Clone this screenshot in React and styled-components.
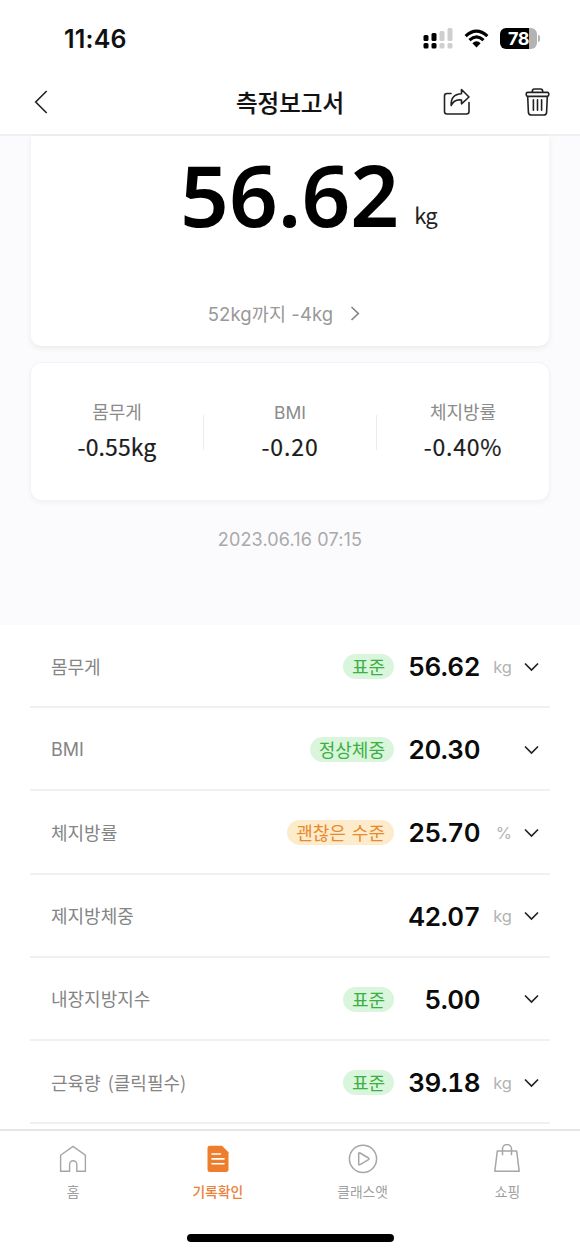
import styled, { createGlobalStyle } from "styled-components";

const GlobalStyle = createGlobalStyle`
*{
  box-sizing:border-box;
}
body{
  margin:0;
  background:#fff;
  font-family:Inter, "Noto Sans CJK KR", sans-serif;
}
`;

const Screen = styled.div`
display:flex;
flex-direction:column;
width:580px;
height:1254px;
overflow:hidden;
background:#fff;
`;

const StatusBar = styled.div`
display:flex;
justify-content:space-between;
align-items:center;
height:70px;
flex:none;
padding:7px 39px 0 64px;
`;

const Clock = styled.div`
font-size:25px;
line-height:30px;
font-weight:600;
letter-spacing:0.2px;
color:#111;
`;

const StatusIcons = styled.div`
display:flex;
align-items:center;
gap:11px;
`;

const Battery = styled.div`
position:relative;
display:flex;
justify-content:center;
align-items:center;
width:37px;
height:21px;
margin-right:4px;
border-radius:6px;
background:linear-gradient(to right, #000 29px, #b3b3b3 29px);
color:#fff;
font-size:18px;
font-weight:700;
letter-spacing:-0.5px;
&::after{
  content:"";
  position:absolute;
  left:38px;
  top:7px;
  width:2px;
  height:7px;
  border-radius:0 2px 2px 0;
  background:#b3b3b3;
}
`;

const Header = styled.div`
display:grid;
grid-template-columns:1fr auto 1fr;
align-items:center;
height:66px;
flex:none;
padding:0 30px 1px 34px;
border-bottom:2px solid #f0f0f1;
`;

const Title = styled.div`
padding-right:4px;
font-family:"Noto Sans CJK KR", sans-serif;
font-size:23.5px;
line-height:34px;
font-weight:500;
-webkit-text-stroke:0.2px #111;
color:#111;
`;

const Actions = styled.div`
display:flex;
justify-content:flex-end;
align-items:center;
gap:54px;
`;

const Summary = styled.div`
display:flex;
flex-direction:column;
align-items:center;
height:489px;
flex:none;
background:#fbfbfe;
`;

const WeightCard = styled.div`
display:flex;
flex-direction:column;
align-items:center;
width:518px;
height:210px;
padding-top:13px;
border-radius:0 0 10px 10px;
background:#fff;
box-shadow:0 2px 6px rgba(0,0,0,0.07);
`;

const Weight = styled.div`
display:flex;
align-items:baseline;
height:90px;
padding-left:37px;
line-height:90px;
font-family:"Noto Sans", sans-serif;
font-size:85.5px;
font-weight:600;
color:#000;
`;

const WeightUnit = styled.span`
position:relative;
top:-3px;
margin-left:15px;
font-family:"Noto Sans CJK KR", sans-serif;
font-size:22px;
font-weight:400;
line-height:30px;
letter-spacing:-0.8px;
color:#222;
`;

const Goal = styled.div`
display:flex;
align-items:center;
gap:17px;
margin-top:60px;
padding-right:12px;
height:28px;
font-size:18.5px;
letter-spacing:0.1px;
color:#999;
`;

const ChangeCard = styled.div`
display:flex;
align-items:flex-start;
width:520px;
height:139px;
margin-top:16px;
padding-top:36px;
border:1px solid #f3f3f4;
border-radius:12px;
background:#fff;
box-shadow:0 2px 5px rgba(0,0,0,0.04);
`;

const Change = styled.div`
display:flex;
flex-direction:column;
align-items:center;
flex:1;
`;

const ChangeName = styled.div`
height:26px;
line-height:${(props) => (props.$latin ? 27 : 25)}px;
font-family:${(props) => (props.$latin ? "Inter" : '"Noto Sans CJK KR"')}, sans-serif;
font-size:${(props) => (props.$latin ? "17.5px" : "18px")};
color:#8b8b8b;
`;

const ChangeValue = styled.div`
height:32px;
margin-top:5px;
line-height:32px;
font-family:"Noto Sans CJK KR", sans-serif;
font-size:23px;
letter-spacing:${(props) => props.$spacing}px;
-webkit-text-stroke:0.2px #1c1c1c;
color:#1c1c1c;
`;

const Divider = styled.div`
width:1px;
height:35px;
margin-top:16px;
background:#ececec;
`;

const Measured = styled.div`
margin-top:27px;
line-height:24px;
font-size:18px;
letter-spacing:0.15px;
color:#a9a9a9;
`;

const List = styled.div`
flex:1;
min-height:0;
overflow:hidden;
padding:0 30px;
`;

const Row = styled.div`
display:flex;
align-items:center;
height:83.2px;
padding:2px 11px 0 21px;
border-bottom:2px solid #f0f0f1;
`;

const RowName = styled.div`
flex:1;
padding-bottom:${(props) => (props.$latin ? 0 : 2)}px;
font-family:${(props) => (props.$latin ? "Inter" : '"Noto Sans CJK KR"')}, sans-serif;
font-size:18px;
line-height:26px;
word-spacing:3px;
color:#858585;
`;

const Badge = styled.div`
height:25px;
line-height:24px;
padding:0 9px;
border-radius:13px;
font-family:"Noto Sans CJK KR", sans-serif;
font-size:18px;
word-spacing:2px;
color:${(props) => (props.$warn ? "#e8892f" : "#3cb043")};
background:${(props) => (props.$warn ? "#fdeccb" : "#d9f6dd")};
`;

const RowValue = styled.div`
width:86px;
text-align:right;
font-size:26px;
font-weight:600;
font-variant-numeric:tabular-nums;
letter-spacing:-0.5px;
color:#0b0b0b;
`;

const RowUnit = styled.div`
width:32px;
margin-right:12px;
text-align:right;
font-size:16.5px;
color:#b3b3b3;
`;

const TabBar = styled.div`
display:flex;
height:125px;
flex:none;
flex-direction:column;
justify-content:space-between;
align-items:center;
padding-bottom:12px;
border-top:2px solid #e6e6e7;
background:#fff;
`;

const Tabs = styled.div`
display:flex;
width:580px;
padding-left:0.6px;
`;

const Tab = styled.div`
display:flex;
flex-direction:column;
align-items:center;
width:144.8px;
padding-top:13px;
font-family:"Noto Sans CJK KR", sans-serif;
font-size:13.8px;
line-height:20px;
gap:7px;
font-weight:${(props) => (props.$active ? 500 : 400)};
color:${(props) => (props.$active ? "#ec8038" : "#a0a0a0")};
`;

const HomeIndicator = styled.div`
width:207px;
height:8px;
border-radius:4px;
background:#000;
`;

const SignalIcon = () => (
  <svg width="30" height="21" viewBox="0 0 30 21">
    <g fill="#000">
      <rect x="0.5" y="7" width="5" height="6" rx="1.5" />
      <rect x="0.5" y="15" width="5" height="5.5" rx="1.5" />
      <rect x="8.5" y="5" width="5" height="8" rx="1.5" />
      <rect x="8.5" y="15" width="5" height="5.5" rx="1.5" />
    </g>
    <g fill="#cfcfcf">
      <rect x="16.5" y="3" width="5" height="10" rx="1.5" />
      <rect x="16.5" y="15" width="5" height="5.5" rx="1.5" />
      <rect x="24.5" y="0" width="5" height="13" rx="1.5" />
      <rect x="24.5" y="15" width="5" height="5.5" rx="1.5" />
    </g>
  </svg>
);

const WifiIcon = () => (
  <svg width="25" height="19" viewBox="0 0 26 19" fill="none" stroke="#000" strokeWidth="3.3">
    <path d="M1.7 7Q13-3.4 24.3 7" />
    <path d="M5.7 11.2Q13 4.5 20.3 11.2" />
    <path d="M8.7 14.4Q13 10.4 17.3 14.4L13 18.8Z" fill="#000" stroke="none" />
  </svg>
);

const BackIcon = () => (
  <svg width="14" height="24" viewBox="0 0 14 24" fill="none" stroke="#222" strokeWidth="1.6">
    <path d="M12.7 1L1.7 12L12.7 23" />
  </svg>
);

const ShareIcon = () => (
  <svg width="28" height="28" viewBox="0 0 28 28" fill="none" stroke="#222" strokeWidth="1.6" strokeLinejoin="round" strokeLinecap="round">
    <path d="M8 5.5H4Q1.5 5.5 1.5 8V23.5Q1.5 26 4 26H23.5Q26 26 26 23.5V14.5" />
    <path d="M18.5 1.5L26 9L18.5 15.8V12Q11 11 8.2 17.5Q7.5 6.5 18.5 5.8Z" />
  </svg>
);

const TrashIcon = () => (
  <svg width="25" height="29" viewBox="0 0 25 29" fill="none" stroke="#222" strokeWidth="1.6" strokeLinejoin="round" strokeLinecap="round">
    <path d="M7.3 5.3V4.3Q7.3 2 9.5 2H15.5Q17.7 2 17.7 4.3V5.3" />
    <rect x="1.2" y="5.4" width="22.6" height="4" rx="1.6" />
    <path d="M2.7 9.6L3.4 25.3Q3.7 28 6.3 28H18.7Q21.3 28 21.6 25.3L22.3 9.6" />
    <path d="M8.4 12.7V23.2M12.5 12.7V23.2M16.6 12.7V23.2" />
  </svg>
);

const GoalArrow = () => (
  <svg width="10" height="15" viewBox="0 0 10 15" fill="none" stroke="#858585" strokeWidth="1.7">
    <path d="M1.5 1L8.3 7.5L1.5 14" />
  </svg>
);

const ChevronDown = () => (
  <svg width="15" height="10" viewBox="0 0 15 10" fill="none" stroke="#222" strokeWidth="1.7">
    <path d="M1 1.5L7.5 8L14 1.5" />
  </svg>
);

const HomeIcon = () => (
  <svg width="30" height="30" viewBox="0 0 30 30" fill="none" stroke="#a6a6a6" strokeWidth="1.4">
    <path d="M2.6 11.2L15 2.4L27.4 11.2V27.3H18.8V20.3A3.6 3.6 0 0 0 11.6 20.3V27.3H2.6Z" />
  </svg>
);

const RecordIcon = () => (
  <svg width="30" height="30" viewBox="0 0 30 30">
    <path d="M6.8 1.7H19L25.5 8.2V25.5Q25.5 28 23 28H6.8Q4.5 28 4.5 25.5V4Q4.5 1.7 6.8 1.7Z" fill="#ee7e2e" />
    <path d="M9 10H17.5M9 14.9H21M9 19.8H21" stroke="#fff" strokeWidth="1.6" strokeLinecap="round" />
  </svg>
);

const PlayIcon = () => (
  <svg width="30" height="30" viewBox="0 0 30 30" fill="none" stroke="#a6a6a6" strokeWidth="1.5" strokeLinejoin="round">
    <circle cx="15" cy="14.8" r="13.6" />
    <path d="M10.7 9.7V19.9Q10.7 21.3 12 20.6L20.5 15.7Q21.7 14.8 20.5 14L12 9Q10.7 8.3 10.7 9.7Z" />
  </svg>
);

const BagIcon = () => (
  <svg width="30" height="30" viewBox="0 0 30 30" fill="none" stroke="#a6a6a6" strokeWidth="1.5" strokeLinejoin="round">
    <path d="M5.3 7H24.7L27.2 27.3H2.8Z" />
    <path d="M10.5 11.2V5A4.5 4.5 0 0 1 19.5 5V11.2" />
  </svg>
);

const changes = [
  { name: "몸무게", value: "-0.55kg", spacing: 0.1 },
  { name: "BMI", value: "-0.20", spacing: 0.9, latin: true },
  { name: "체지방률", value: "-0.40%", spacing: 0.8 },
];

const records = [
  { name: "몸무게", badge: "표준", value: "56.62", unit: "kg" },
  { name: "BMI", badge: "정상체중", value: "20.30", latin: true },
  { name: "체지방률", badge: "괜찮은 수준", warn: true, value: "25.70", unit: "%" },
  { name: "제지방체중", value: "42.07", unit: "kg" },
  { name: "내장지방지수", badge: "표준", value: "5.00" },
  { name: "근육량 (클릭필수)", badge: "표준", value: "39.18", unit: "kg" },
];

const tabs = [
  { name: "홈", Icon: HomeIcon },
  { name: "기록확인", Icon: RecordIcon, active: true },
  { name: "클래스앳", Icon: PlayIcon },
  { name: "쇼핑", Icon: BagIcon },
];

const ChangeSummary = () => (
  <ChangeCard>
    {changes.map((item, i) => [
      i > 0 && <Divider key={"line" + i} />,
      <Change key={item.name}>
        <ChangeName $latin={item.latin}>{item.name}</ChangeName>
        <ChangeValue $spacing={item.spacing}>{item.value}</ChangeValue>
      </Change>,
    ])}
  </ChangeCard>
);

const App = () => {
  return (
    <Screen>
      <GlobalStyle />
      <StatusBar>
        <Clock>11:46</Clock>
        <StatusIcons>
          <SignalIcon />
          <WifiIcon />
          <Battery>78</Battery>
        </StatusIcons>
      </StatusBar>
      <Header>
        <BackIcon />
        <Title>측정보고서</Title>
        <Actions>
          <ShareIcon />
          <TrashIcon />
        </Actions>
      </Header>
      <Summary>
        <WeightCard>
          <Weight>
            56.62<WeightUnit>kg</WeightUnit>
          </Weight>
          <Goal>
            52kg까지 -4kg
            <GoalArrow />
          </Goal>
        </WeightCard>
        <ChangeSummary />
        <Measured>2023.06.16 07:15</Measured>
      </Summary>
      <List>
        {records.map((item) => (
          <Row key={item.name}>
            <RowName $latin={item.latin}>{item.name}</RowName>
            {item.badge && <Badge $warn={item.warn}>{item.badge}</Badge>}
            <RowValue>{item.value}</RowValue>
            <RowUnit>{item.unit}</RowUnit>
            <ChevronDown />
          </Row>
        ))}
      </List>
      <TabBar>
        <Tabs>
          {tabs.map(({ name, Icon, active }) => (
            <Tab key={name} $active={active}>
              <Icon />
              {name}
            </Tab>
          ))}
        </Tabs>
        <HomeIndicator />
      </TabBar>
    </Screen>
  );
};

export default App;
